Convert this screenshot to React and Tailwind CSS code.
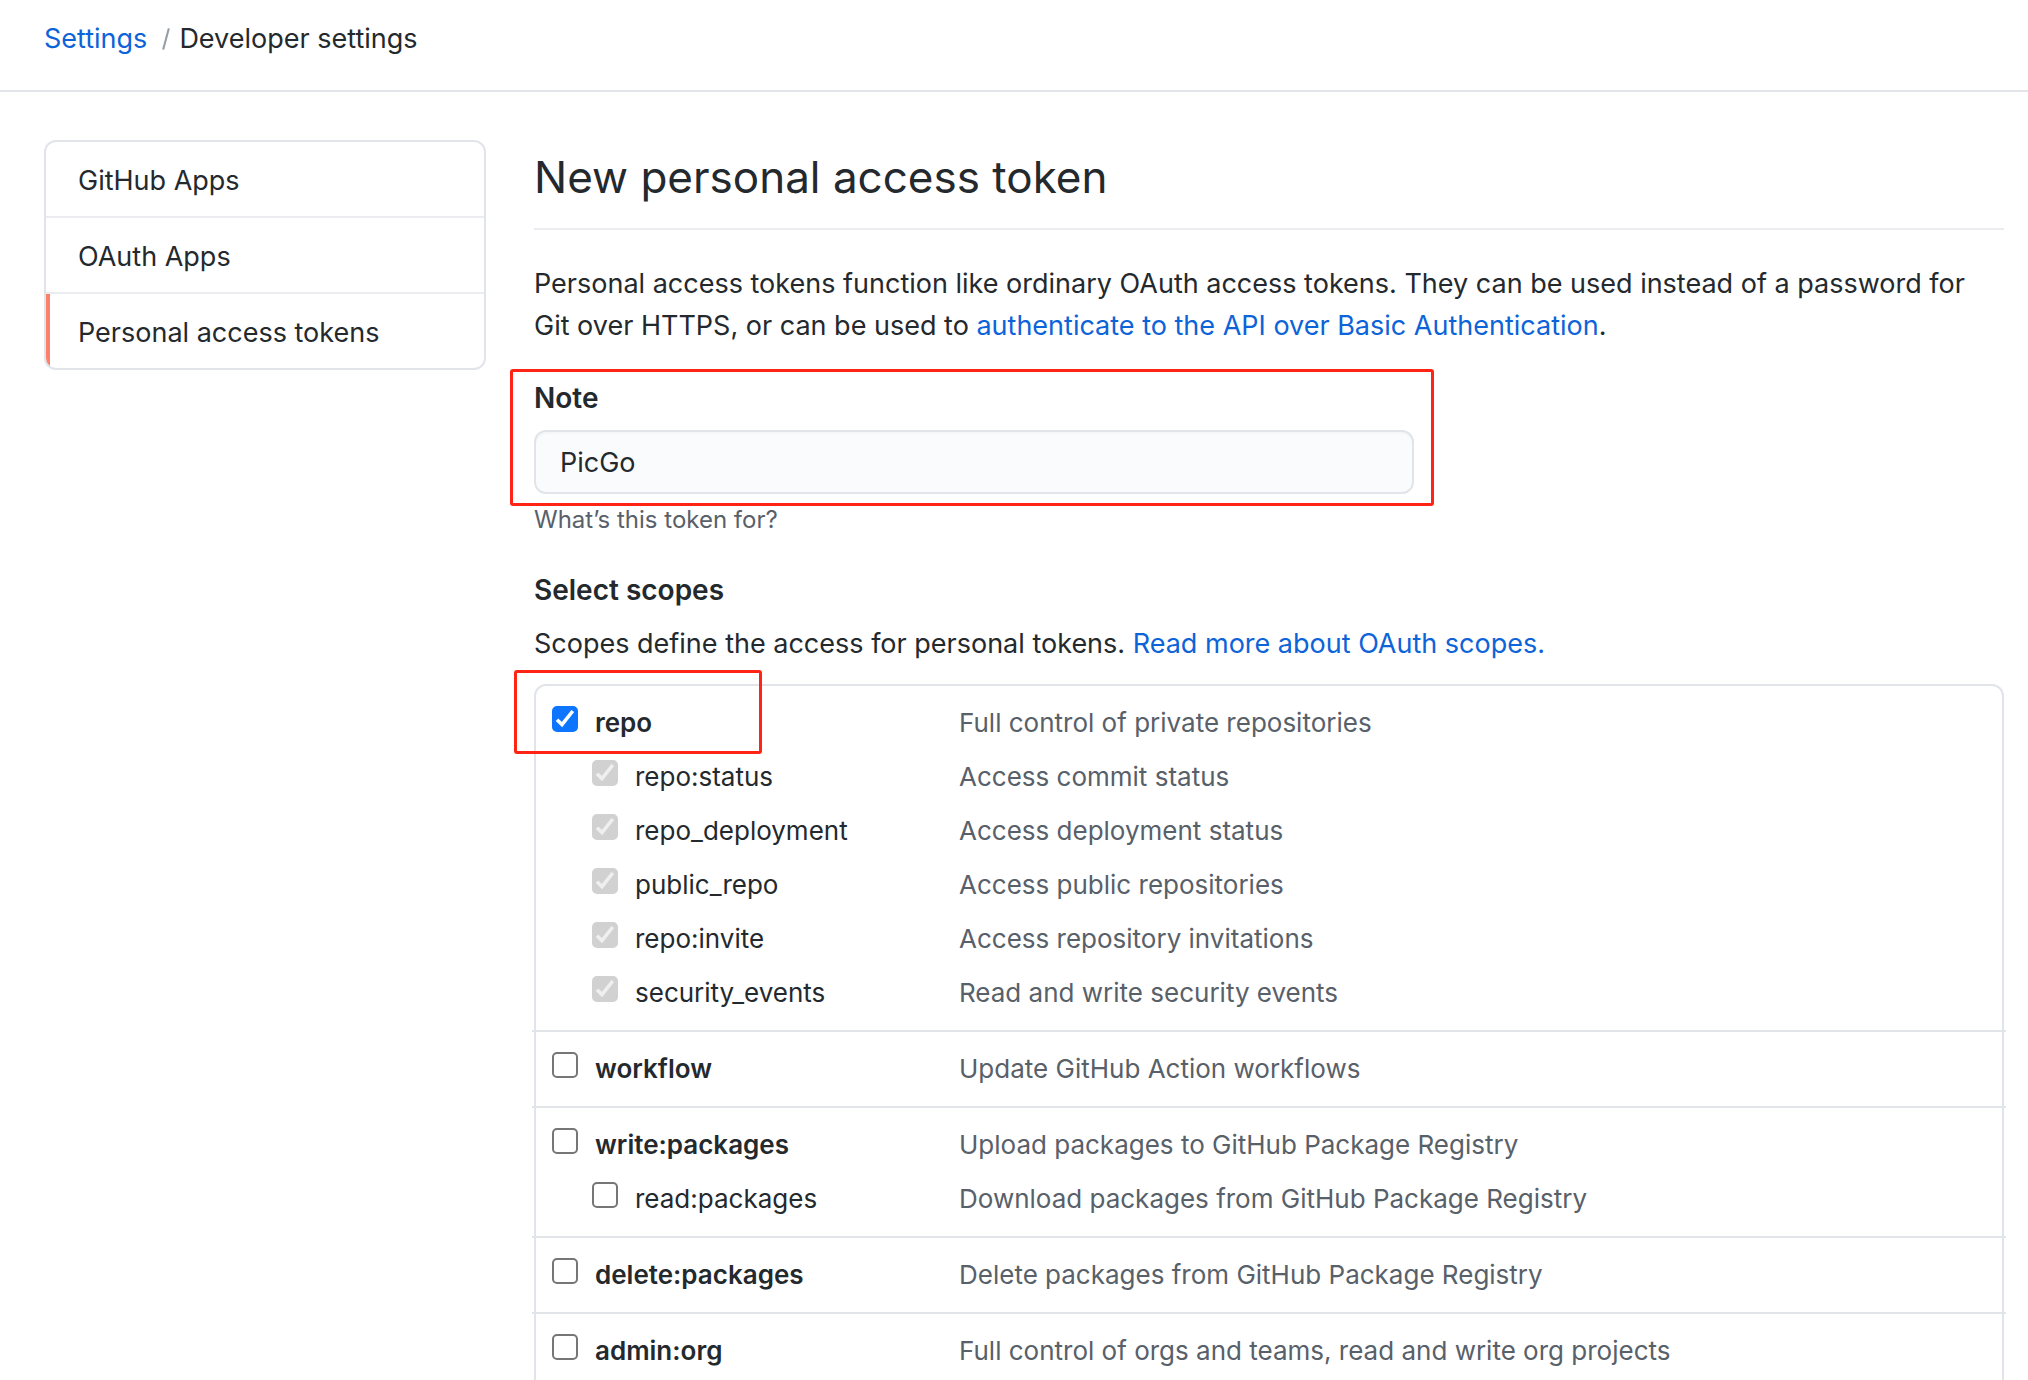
const link = "text-[#0d63d8] hover:underline";

const navItems = [
  { label: "GitHub Apps" },
  { label: "OAuth Apps" },
  { label: "Personal access tokens", current: true },
];

const scopeGroups = [
  {
    name: "repo",
    text: "Full control of private repositories",
    checked: true,
    highlight: true,
    children: [
      { name: "repo:status", text: "Access commit status", checked: true, disabled: true },
      { name: "repo_deployment", text: "Access deployment status", checked: true, disabled: true },
      { name: "public_repo", text: "Access public repositories", checked: true, disabled: true },
      { name: "repo:invite", text: "Access repository invitations", checked: true, disabled: true },
      { name: "security_events", text: "Read and write security events", checked: true, disabled: true },
    ],
  },
  { name: "workflow", text: "Update GitHub Action workflows", children: [] },
  {
    name: "write:packages",
    text: "Upload packages to GitHub Package Registry",
    children: [{ name: "read:packages", text: "Download packages from GitHub Package Registry" }],
  },
  { name: "delete:packages", text: "Delete packages from GitHub Package Registry", children: [] },
  { name: "admin:org", text: "Full control of orgs and teams, read and write org projects", children: [] },
];

function Checkbox({ id, checked, disabled }) {
  return (
    <span className="mt-[3px] grid shrink-0 grid-cols-1">
      <input
        id={id}
        type="checkbox"
        defaultChecked={checked}
        disabled={disabled}
        className="peer col-start-1 row-start-1 size-[26px] appearance-none rounded-[5px] border-2 border-[#767676] bg-white checked:border-[#0d75ff] checked:bg-[#0d75ff] disabled:border-[#d1d1d1] disabled:bg-[#d1d1d1]"
      />
      <svg
        viewBox="0 0 26 26"
        aria-hidden="true"
        className="pointer-events-none invisible col-start-1 row-start-1 size-[26px] text-white peer-checked:visible peer-disabled:text-[#efefef]"
      >
        <path d="M5 13.8 L10 18.6 L20.8 5" fill="none" stroke="currentColor" strokeWidth="3.6" />
      </svg>
    </span>
  );
}

function ScopeRow({ scope, child }) {
  const id = "scope-" + scope.name;
  return (
    <div className="flex items-start pt-[7px] pb-2 text-[26px] leading-[39px]">
      <div
        className={
          "relative flex w-[423px] shrink-0 items-start gap-[17px] " + (child ? "pl-14" : "pl-4")
        }
      >
        <Checkbox id={id} checked={scope.checked} disabled={scope.disabled} />
        <label htmlFor={id} className={child ? "" : "font-semibold"}>
          {scope.name}
        </label>
        {scope.highlight && (
          <span className="pointer-events-none absolute -top-[33px] -left-[22px] h-[84px] w-[248px] rounded-[3px] border-3 border-[#ff2414]" />
        )}
      </div>
      <span className="text-[#586069]">{scope.text}</span>
    </div>
  );
}

export default function App() {
  return (
    <div className="h-screen overflow-hidden bg-white font-['Inter','Liberation_Sans',sans-serif] text-[27px] leading-[42px] text-[#24292e]">
      <header className="border-b-2 border-[#e1e4e8] px-11 pt-[18px] pb-[30px]">
        <nav aria-label="Breadcrumb" className="flex items-center">
          <a href="#settings" className={link}>Settings</a>
          <span className="mr-3 ml-4.5 h-[22px] w-0.5 rotate-15 bg-[#959da5]" />
          <span>Developer settings</span>
        </nav>
      </header>

      <div className="flex items-start gap-12 pt-12 pr-6 pl-11">
        <nav
          aria-label="Developer settings"
          className="w-[442px] shrink-0 divide-y-2 divide-[#eaecef] overflow-hidden rounded-xl border-2 border-[#e1e4e8]"
        >
          {navItems.map((item) => (
            <a
              key={item.label}
              href="#nav"
              aria-current={item.current ? "page" : undefined}
              className="relative block px-8 pt-[18px] pb-3.5"
            >
              {item.current && <span className="absolute inset-y-0 left-0 w-1 bg-[#fb816b]" />}
              {item.label}
            </a>
          ))}
        </nav>

        <main className="min-w-0 flex-1">
          <h1 className="mb-[33px] border-b-2 border-[#eaecef] pt-px pb-[15px] text-[44px] leading-[72px]">
            New personal access token
          </h1>
          <p>
            Personal access tokens function like ordinary OAuth access tokens. They can be used
            instead of a password for Git over HTTPS, or can be used to{" "}
            <a href="#api" className={link}>authenticate to the API over Basic Authentication</a>.
          </p>

          <div className="relative mt-[30px] w-[880px] max-w-full">
            <label htmlFor="note" className="block text-[28px] font-semibold">Note</label>
            <input
              id="note"
              type="text"
              defaultValue="PicGo"
              className="mt-[11px] block h-16 w-full rounded-xl border-2 border-[#e1e4e8] bg-[#fafbfc] px-6 shadow-[inset_0_2px_0_rgba(225,228,232,0.2)] outline-none"
            />
            <span className="pointer-events-none absolute -top-2 -right-5 -bottom-3 -left-6 rounded-[3px] border-3 border-[#ff2414]" />
          </div>
          <p className="mt-2 text-2xl leading-9 text-[#586069]">What’s this token for?</p>

          <h2 className="mt-[31px] text-[28px] font-semibold">Select scopes</h2>
          <p className="mt-3">
            Scopes define the access for personal tokens.{" "}
            <a href="#scopes" className={link}>Read more about OAuth scopes.</a>
          </p>

          <ul className="mt-[19px] rounded-xl border-2 border-[#e1e4e8]">
            {scopeGroups.map((group) => (
              <li key={group.name} className="-mx-1 border-b-2 border-[#e1e4e8] px-1 py-2.5">
                <ScopeRow scope={group} />
                {group.children.map((scope) => (
                  <ScopeRow key={scope.name} scope={scope} child />
                ))}
              </li>
            ))}
          </ul>
        </main>
      </div>
    </div>
  );
}
